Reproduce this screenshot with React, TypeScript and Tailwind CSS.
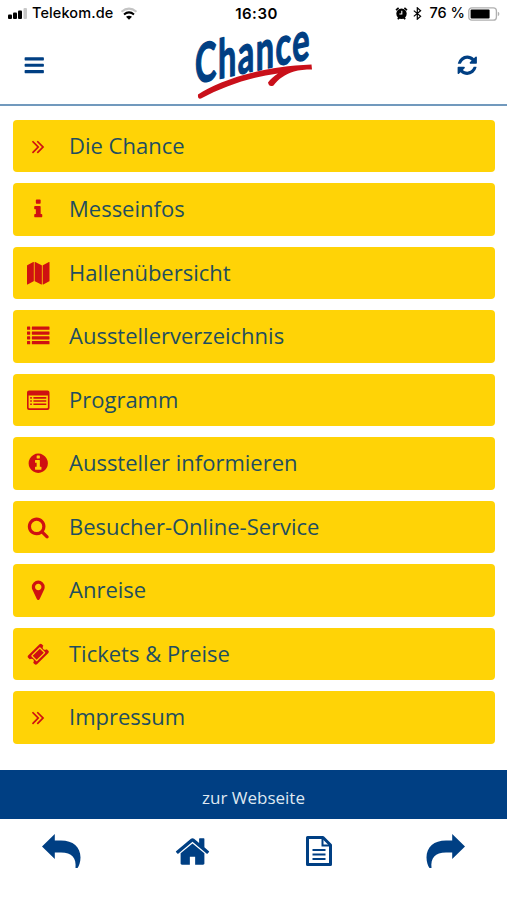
import type { ReactNode } from 'react';

const ICONS = {
    bars: 'M1664 1344v128q0 26-19 45t-45 19h-1408q-26 0-45-19t-19-45v-128q0-26 19-45t45-19h1408q26 0 45 19t19 45zm0-512v128q0 26-19 45t-45 19h-1408q-26 0-45-19t-19-45v-128q0-26 19-45t45-19h1408q26 0 45 19t19 45zm0-512v128q0 26-19 45t-45 19h-1408q-26 0-45-19t-19-45v-128q0-26 19-45t45-19h1408q26 0 45 19t19 45z',
    refresh: 'M1639 1056q0 5-1 7-64 268-268 434.5t-478 166.5q-146 0-282.5-55t-243.5-157l-129 129q-19 19-45 19t-45-19-19-45v-448q0-26 19-45t45-19h448q26 0 45 19t19 45-19 45l-137 137q71 66 161 102t187 36q134 0 250-65t186-179q11-17 53-117 8-23 30-23h192q13 0 22.5 9.5t9.5 22.5zm25-800v448q0 26-19 45t-45 19h-448q-26 0-45-19t-19-45 19-45l138-138q-148-137-349-137-134 0-250 65t-186 179q-11 17-53 117-8 23-30 23h-199q-13 0-22.5-9.5t-9.5-22.5v-7q65-268 270-434.5t480-166.5q146 0 284 55.5t245 156.5l130-129q19-19 45-19t45 19 19 45z',
    angles: 'M979 960q0 13-10 23l-466 466q-10 10-23 10t-23-10l-50-50q-10-10-10-23t10-23l393-393-393-393q-10-10-10-23t10-23l50-50q10-10 23-10t23 10l466 466q10 10 10 23zm384 0q0 13-10 23l-466 466q-10 10-23 10t-23-10l-50-50q-10-10-10-23t10-23l393-393-393-393q-10-10-10-23t10-23l50-50q10-10 23-10t23 10l466 466q10 10 10 23z',
    info: 'M1216 1344v128q0 26-19 45t-45 19h-512q-26 0-45-19t-19-45v-128q0-26 19-45t45-19h64v-384h-64q-26 0-45-19t-19-45v-128q0-26 19-45t45-19h384q26 0 45 19t19 45v576h64q26 0 45 19t19 45zm-128-1152v192q0 26-19 45t-45 19h-256q-26 0-45-19t-19-45v-192q0-26 19-45t45-19h256q26 0 45 19t19 45z',
    map: 'M512 0q13 0 22.5 9.5t9.5 22.5v1472q0 20-17 28l-480 256q-7 4-15 4-13 0-22.5-9.5t-9.5-22.5v-1472q0-20 17-28l480-256q7-4 15-4zm1248 0q13 0 22.5 9.5t9.5 22.5v1472q0 20-17 28l-480 256q-7 4-15 4-13 0-22.5-9.5t-9.5-22.5v-1472q0-20 17-28l480-256q7-4 15-4zm-1120 0q8 0 14 3l512 256q18 10 18 29v1472q0 13-9.5 22.5t-22.5 9.5q-8 0-14-3l-512-256q-18-10-18-29v-1472q0-13 9.5-22.5t22.5-9.5z',
    list: 'M32 128h192q32 0 32 32v192q0 32-32 32h-192q-32 0-32-32v-192q0-32 32-32zm384 0h1344q32 0 32 32v192q0 32-32 32h-1344q-32 0-32-32v-192q0-32 32-32zm-384 384h192q32 0 32 32v192q0 32-32 32h-192q-32 0-32-32v-192q0-32 32-32zm384 0h1344q32 0 32 32v192q0 32-32 32h-1344q-32 0-32-32v-192q0-32 32-32zm-384 384h192q32 0 32 32v192q0 32-32 32h-192q-32 0-32-32v-192q0-32 32-32zm384 0h1344q32 0 32 32v192q0 32-32 32h-1344q-32 0-32-32v-192q0-32 32-32zm-384 384h192q32 0 32 32v192q0 32-32 32h-192q-32 0-32-32v-192q0-32 32-32zm384 0h1344q32 0 32 32v192q0 32-32 32h-1344q-32 0-32-32v-192q0-32 32-32z',
    listAlt: 'M160 128h1472q160 0 160 160v1216q0 160-160 160h-1472q-160 0-160-160v-1216q0-160 160-160zM128 512v960q0 64 64 64h1408q64 0 64-64v-960zM256 640h128v128h-128zM512 640h1024v128h-1024zM256 896h128v128h-128zM512 896h1024v128h-1024zM256 1152h128v128h-128zM512 1152h1024v128h-1024z',
    infoCircle: 'M1152 1376v-160q0-14-9-23t-23-9h-96v-512q0-14-9-23t-23-9h-320q-14 0-23 9t-9 23v160q0 14 9 23t23 9h96v320h-96q-14 0-23 9t-9 23v160q0 14 9 23t23 9h448q14 0 23-9t9-23zm-128-896v-160q0-14-9-23t-23-9h-192q-14 0-23 9t-9 23v160q0 14 9 23t23 9h192q14 0 23-9t9-23zm640 416q0 209-103 385.5t-279.5 279.5-385.5 103-385.5-103-279.5-279.5-103-385.5 103-385.5 279.5-279.5 385.5-103 385.5 103 279.5 279.5 103 385.5z',
    search: 'M1216 832q0-185-131.5-316.5t-316.5-131.5-316.5 131.5-131.5 316.5 131.5 316.5 316.5 131.5 316.5-131.5 131.5-316.5zm512 832q0 52-38 90t-90 38q-54 0-90-38l-343-342q-179 124-399 124-143 0-273.5-55.5t-225-150-150-225-55.5-273.5 55.5-273.5 150-225 225-150 273.5-55.5 273.5 55.5 225 150 150 225 55.5 273.5q0 220-124 399l343 343q37 37 37 90z',
    marker: 'M1152 640q0-106-75-181t-181-75-181 75-75 181 75 181 181 75 181-75 75-181zm256 0q0 109-33 179l-364 774q-16 33-47.5 52t-67.5 19-67.5-19-46.5-52l-365-774q-33-70-33-179 0-212 150-362t362-150 362 150 150 362z',
    ticket: 'M1024 452l316 316-572 572-316-316zm-211 979l618-618q19-19 19-45t-19-45l-362-362q-18-18-45-18t-45 18l-618 618q-19 19-19 45t19 45l362 362q18 18 45 18t45-18zm889-637l-907 908q-37 37-90.5 37t-90.5-37l-126-126q56-56 56-136t-56-136-136-56-136 56l-125-126q-37-37-37-90.5t37-90.5l907-906q37-37 90.5-37t90.5 37l125 125q-56 56-56 136t56 136 136 56 136-56l126 125q37 37 37 90.5t-37 90.5z',
    home: 'M1472 992v480q0 26-19 45t-45 19h-384v-384h-256v384h-384q-26 0-45-19t-19-45v-480q0-1 .5-3t.5-3l575-474 575 474q1 2 1 6zm223-69l-62 74q-8 9-21 11h-3q-13 0-21-7l-692-577-692 577q-12 8-24 7-13-2-21-11l-62-74q-8-10-7-23.5t11-21.5l719-599q32-26 76-26t76 26l244 204v-195q0-14 9-23t23-9h192q14 0 23 9t9 23v408l219 182q10 8 11 21.5t-7 23.5z',
};

type IconName = keyof typeof ICONS;

interface MenuEntry {
    icon: IconName;
    label: string;
}

const MENU: MenuEntry[] = [
    { icon: 'angles', label: 'Die Chance' },
    { icon: 'info', label: 'Messeinfos' },
    { icon: 'map', label: 'Hallenübersicht' },
    { icon: 'list', label: 'Ausstellerverzeichnis' },
    { icon: 'listAlt', label: 'Programm' },
    { icon: 'infoCircle', label: 'Aussteller informieren' },
    { icon: 'search', label: 'Besucher-Online-Service' },
    { icon: 'marker', label: 'Anreise' },
    { icon: 'ticket', label: 'Tickets & Preise' },
    { icon: 'angles', label: 'Impressum' },
];

function Icon({ name, className }: { name: IconName; className: string }) {
    return (
        <svg viewBox="0 0 1792 1792" fill="currentColor" fillRule="evenodd" overflow="visible" className={className}>
            <path d={ICONS[name]} />
        </svg>
    );
}

function StatusBar() {
    return (
        <div className="grid h-[27px] grid-cols-[1fr_auto_1fr] items-center pl-2 pr-[7px] font-['Inter','Liberation_Sans',sans-serif] text-[14px] leading-none text-black">
            <div className="flex items-center">
                <svg viewBox="0 0 20 11" className="h-[11px] w-5">
                    <rect x="0" y="6.5" width="4" height="4.5" rx="1" />
                    <rect x="5" y="4.5" width="4" height="6.5" rx="1" />
                    <rect x="10" y="2.5" width="4" height="8.5" rx="1" />
                    <rect x="15.5" y="0" width="3.5" height="11" rx="1" fill="#c8c8c8" />
                </svg>
                <span className="ml-1 text-[14.5px] font-medium tracking-[0.1px]">Telekom.de</span>
                <svg viewBox="0 0 18 13" fill="none" className="ml-[7px] h-[13px] w-[18px]">
                    <path d="M1.5 4.8Q9-1.6 16.5 4.8" stroke="#c4c4c4" strokeWidth="2" />
                    <path d="M4 7.5Q9 3.2 14 7.5" stroke="#000" strokeWidth="2" />
                    <path d="M6 9.8Q9 7.6 12 9.8L9 12.7Z" fill="#000" />
                </svg>
            </div>
            <span className="pl-[5px] text-[15px] font-semibold tracking-[0.5px]">16:30</span>
            <div className="flex items-center justify-end">
                <svg viewBox="0 0 13 13" fill="none" className="h-[13px] w-[13px]">
                    <path d="M1 3.2 3.6.9M12 3.2 9.4.9M2.8 12.2l1.4-1.6M10.2 12.2l-1.4-1.6" stroke="#000" strokeWidth="1.6" />
                    <circle cx="6.5" cy="6.8" r="5.2" fill="#000" />
                    <path d="M6.8 3.8V7H4.4" stroke="#fff" strokeWidth="1.1" />
                </svg>
                <svg viewBox="0 0 9 13" fill="none" className="ml-[5px] h-[13px] w-[9px]">
                    <path d="M.8 3.6 7.6 9.3 4.3 12.2V.8L7.6 3.7.8 9.4" stroke="#000" strokeWidth="1.2" />
                </svg>
                <span className="ml-2 whitespace-nowrap text-[14.5px] font-medium">76 %</span>
                <svg viewBox="0 0 32 14" fill="none" className="ml-[3px] h-3.5 w-8">
                    <rect x=".8" y=".8" width="27.6" height="12.4" rx="3" stroke="#b0b0b0" strokeWidth="1.3" />
                    <rect x="2.6" y="2.6" width="19" height="8.8" rx="1" fill="#000" />
                    <path d="M29.8 4.8q1.6.6 1.6 2.2t-1.6 2.2z" fill="#b0b0b0" />
                </svg>
            </div>
        </div>
    );
}

function Logo() {
    return (
        <svg viewBox="0 0 126 74" className="h-[74px] w-[126px] overflow-visible">
            <g transform="matrix(1 -0.22 0 1 7 57)">
                <text
                    x="0"
                    y="0"
                    fontSize="54"
                    transform="scale(0.6 1)"
                    textLength="191"
                    lengthAdjust="spacing"
                    strokeWidth="1.4"
                    strokeLinejoin="round"
                    className="fill-[#003f83] stroke-[#003f83] font-['Lato',sans-serif] font-bold"
                >
                    Chance
                </text>
            </g>
            <path
                d="M10 67.5C29 55.5 66 40 123.5 37.5L124 42.5C117 42.5 111 43 106 44.5C98 47 90 52 85.5 58.5Q81 60.5 80 55.5C82.5 52 86 49 90 46.5C60 50.500 36 59.500 13 71.500Q9.500 72.500 10 67.500Z"
                fill="#c9101a"
            />
        </svg>
    );
}

function NavButton({ label, children }: { label: string; children: ReactNode }) {
    return (
        <button type="button" aria-label={label} className="flex h-16 items-center justify-center">
            {children}
        </button>
    );
}

const REPLY_PATH = 'M0 12.5 12.8 0V6.5H19C31 6.5 38.5 13 38.5 23.5C38.5 28 37 32 35.5 34H33.5C34.5 24 30 18.5 19 18.5H12.8V25Z';

export default function App() {
    return (
        <div className="flex h-[900px] w-full flex-col overflow-hidden bg-white font-['Open_Sans',sans-serif]">
            <StatusBar />
            <header className="flex h-[79px] shrink-0 items-start justify-between border-b-2 border-[#7199bd] pl-[23px] pr-[29px] text-[#003f83]">
                <button type="button" aria-label="Menü" className="mt-[27px]">
                    <Icon name="bars" className="size-[22.5px]" />
                </button>
                <Logo />
                <button type="button" aria-label="Aktualisieren" className="mt-[27px]">
                    <Icon name="refresh" className="size-[22.5px]" />
                </button>
            </header>

            <nav className="flex flex-1 flex-col gap-[11px] pl-[13px] pr-[12.5px] pt-[13.5px]">
                {MENU.map(({ icon, label }) => (
                    <a key={label} className="flex h-[52.5px] shrink-0 items-center rounded-[4px] bg-[#ffd306] pl-[13.5px]">
                        <Icon name={icon} className="size-[22.5px] text-[#cf1111]" />
                        <span className="ml-5 pb-[2px] text-[22px] leading-none text-[#1f4e5f]">{label}</span>
                    </a>
                ))}
            </nav>

            <div className="flex h-[49px] shrink-0 items-center justify-center bg-[#003f83] pt-[6px] text-[17px] text-[#dfe8f1]">
                zur Webseite
            </div>
            <footer className="flex h-[81px] shrink-0 items-start justify-between px-[42px] text-[#003f83]">
                <NavButton label="Zurück">
                    <svg viewBox="0 0 39 34" fill="currentColor" className="h-[34px] w-[39px]">
                        <path d={REPLY_PATH} />
                    </svg>
                </NavButton>
                <NavButton label="Startseite">
                    <Icon name="home" className="mr-[3px] size-[37px]" />
                </NavButton>
                <NavButton label="Dokument">
                    <svg viewBox="0 0 26 30" fill="none" stroke="currentColor" className="mr-px h-[30px] w-[26px]">
                        <path d="M1.5 1.5H17L24.5 9V28.5H1.5Z" strokeWidth="3" strokeLinejoin="round" />
                        <path d="M16.5 1.5V9.5H24.5" strokeWidth="2" />
                        <path d="M6.5 14H19.5M6.5 18.5H19.5M6.5 23H19.5" strokeWidth="2" />
                    </svg>
                </NavButton>
                <NavButton label="Vor">
                    <svg viewBox="0 0 39 34" fill="currentColor" className="h-[34px] w-[39px] -scale-x-100">
                        <path d={REPLY_PATH} />
                    </svg>
                </NavButton>
            </footer>
        </div>
    );
}
